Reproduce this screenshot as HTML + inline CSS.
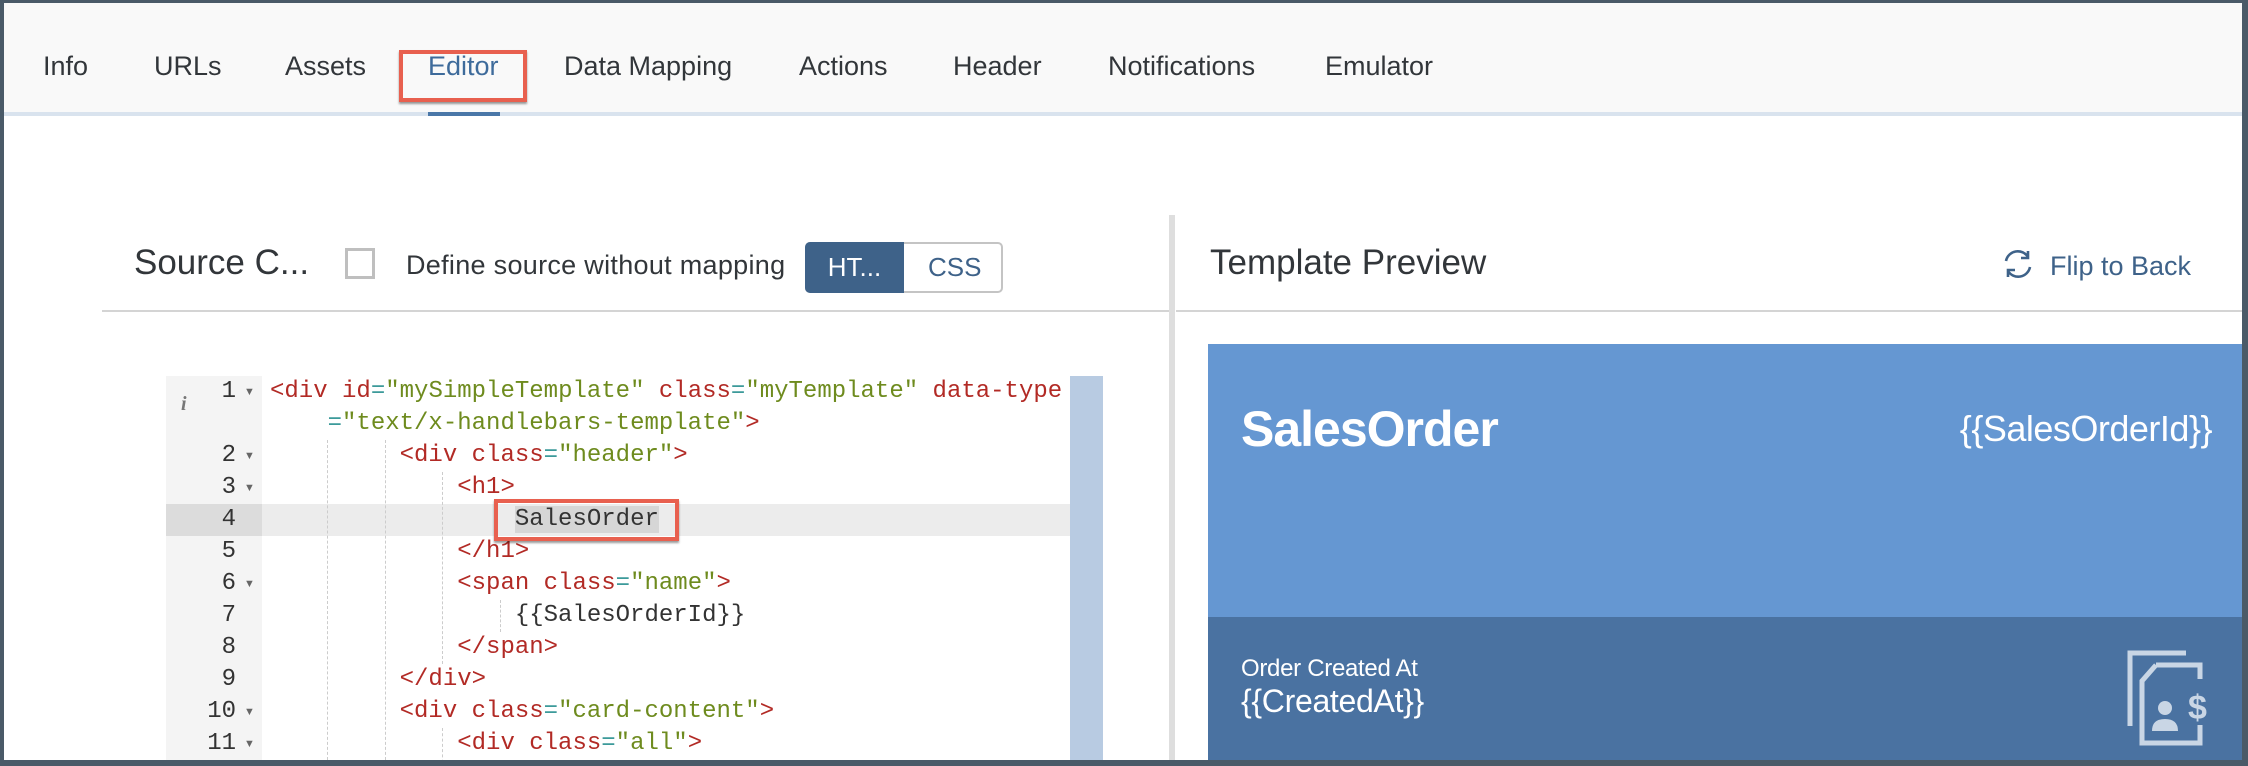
<!DOCTYPE html>
<html><head><meta charset="utf-8"><style>
*{margin:0;padding:0;box-sizing:border-box}
body{width:2248px;height:766px;overflow:hidden;background:#4a5a68;font-family:"Liberation Sans",sans-serif;position:relative}
.page{position:absolute;left:4px;top:3px;width:2238px;height:757px;background:#fff;overflow:hidden}
.a{position:absolute;white-space:nowrap}
.tabbar{position:absolute;left:0;top:0;width:2238px;height:109px;background:#f9f9f9}
.tabline{position:absolute;left:0;top:109px;width:2238px;height:4px;background:#d9e3ee}
.tab{position:absolute;top:48px;font-size:27px;color:#32363a;white-space:nowrap}
.code{font-family:"Liberation Mono",monospace;font-size:24px;color:#333}
.t{color:#b22a25}.v{color:#6e8b1e}.e{color:#3c9a9a}
.row{position:absolute;left:266px;height:32px;line-height:32px;white-space:pre}
.ln{position:absolute;width:74px;text-align:right;left:158px;height:32px;line-height:32px;font-family:"Liberation Mono",monospace;font-size:24px;color:#333}
.ar{position:absolute;left:240px;font-size:11px;color:#666;line-height:32px}
.g{position:absolute;width:0;border-left:1px dashed #ccc}
</style></head><body>
<div class="page">
<div class="tabbar"></div><div class="tabline"></div>
<div style="position:absolute;left:424px;top:109px;width:72px;height:4px;background:#4a77a8"></div>
<div class="tab" style="left:39px">Info</div>
<div class="tab" style="left:150px">URLs</div>
<div class="tab" style="left:281px">Assets</div>
<div class="tab" style="left:424px;color:#3e6b9b">Editor</div>
<div class="tab" style="left:560px">Data Mapping</div>
<div class="tab" style="left:795px">Actions</div>
<div class="tab" style="left:949px">Header</div>
<div class="tab" style="left:1104px">Notifications</div>
<div class="tab" style="left:1321px">Emulator</div>
<div style="position:absolute;left:395px;top:47px;width:128px;height:52px;border:4px solid #e8604f;box-shadow:0 2px 2px rgba(0,0,0,.4)"></div>

<!-- left header -->
<div class="a" style="left:130px;top:240px;font-size:35px;color:#32363a">Source C...</div>
<div style="position:absolute;left:341px;top:245px;width:30px;height:31px;border:3px solid #bfbfbf;background:#fff"></div>
<div class="a" style="left:402px;top:247px;font-size:27px;color:#32363a;letter-spacing:0.3px">Define source without mapping</div>
<div style="position:absolute;left:801px;top:239px;width:198px;height:51px;border:2px solid #c4c4c4;border-radius:5px;background:#fff"></div>
<div style="position:absolute;left:801px;top:239px;width:99px;height:51px;background:#3e6289;border-radius:5px 0 0 5px;color:#fff;font-size:26px;line-height:51px;text-align:center">HT...</div>
<div class="a" style="left:924px;top:239px;line-height:51px;font-size:26px;color:#3e6289">CSS</div>
<div style="position:absolute;left:98px;top:307px;width:1068px;height:2px;background:#d4d4d4"></div>

<!-- splitter -->
<div style="position:absolute;left:1165px;top:212px;width:6px;height:560px;background:#dedede"></div>

<!-- editor -->
<div style="position:absolute;left:162px;top:373px;width:96px;height:400px;background:#f4f4f4"></div>
<div style="position:absolute;left:162px;top:501px;width:96px;height:32px;background:#dcdcdc"></div>
<div style="position:absolute;left:258px;top:501px;width:808px;height:32px;background:#ececec"></div>
<div style="position:absolute;left:1066px;top:373px;width:33px;height:400px;background:#b8cbe2"></div>
<div class="a" style="left:177px;top:390px;font-family:'Liberation Serif',serif;font-style:italic;font-weight:bold;font-size:20px;color:#777">i</div>
<div class="g" style="left:323px;top:437px;height:330px"></div>
<div class="g" style="left:381px;top:437px;height:330px"></div>
<div class="g" style="left:438px;top:469px;height:192px"></div>
<div class="g" style="left:438px;top:725px;height:40px"></div>
<div class="g" style="left:496px;top:597px;height:32px"></div>

<div class="ln" style="top:373px">1</div><div class="ar" style="top:373px">▼</div>
<div class="ln" style="top:437px">2</div><div class="ar" style="top:437px">▼</div>
<div class="ln" style="top:469px">3</div><div class="ar" style="top:469px">▼</div>
<div class="ln" style="top:501px">4</div>
<div class="ln" style="top:533px">5</div>
<div class="ln" style="top:565px">6</div><div class="ar" style="top:565px">▼</div>
<div class="ln" style="top:597px">7</div>
<div class="ln" style="top:629px">8</div>
<div class="ln" style="top:661px">9</div>
<div class="ln" style="top:693px">10</div><div class="ar" style="top:693px">▼</div>
<div class="ln" style="top:725px">11</div><div class="ar" style="top:725px">▼</div>

<div class="code">
<div class="row" style="top:373px"><span class="t">&lt;div</span> <span class="t">id</span><span class="e">=</span><span class="v">"mySimpleTemplate"</span> <span class="t">class</span><span class="e">=</span><span class="v">"myTemplate"</span> <span class="t">data-type</span></div>
<div class="row" style="top:405px">    <span class="e">=</span><span class="v">"text/x-handlebars-template"</span><span class="t">&gt;</span></div>
<div class="row" style="top:437px">         <span class="t">&lt;div</span> <span class="t">class</span><span class="e">=</span><span class="v">"header"</span><span class="t">&gt;</span></div>
<div class="row" style="top:469px">             <span class="t">&lt;h1&gt;</span></div>
<div class="row" style="top:501px">                 <span style="background:#d6d6d6">SalesOrder</span></div>
<div class="row" style="top:533px">             <span class="t">&lt;/h1&gt;</span></div>
<div class="row" style="top:565px">             <span class="t">&lt;span</span> <span class="t">class</span><span class="e">=</span><span class="v">"name"</span><span class="t">&gt;</span></div>
<div class="row" style="top:597px">                 {{SalesOrderId}}</div>
<div class="row" style="top:629px">             <span class="t">&lt;/span&gt;</span></div>
<div class="row" style="top:661px">         <span class="t">&lt;/div&gt;</span></div>
<div class="row" style="top:693px">         <span class="t">&lt;div</span> <span class="t">class</span><span class="e">=</span><span class="v">"card-content"</span><span class="t">&gt;</span></div>
<div class="row" style="top:725px">             <span class="t">&lt;div</span> <span class="t">class</span><span class="e">=</span><span class="v">"all"</span><span class="t">&gt;</span></div>
</div>
<div style="position:absolute;left:490px;top:496px;width:185px;height:42px;border:4px solid #e8604f;box-shadow:0 2px 2px rgba(0,0,0,.4)"></div>

<!-- right -->
<div class="a" style="left:1206px;top:240px;font-size:35px;color:#32363a">Template Preview</div>
<svg style="position:absolute;left:1997px;top:244px" width="34" height="34" viewBox="0 0 34 34" fill="none" stroke="#3e6289" stroke-width="2.6">
<path d="M5 14 A12 12 0 0 1 27 10"/><path d="M27 4 V11 H20"/>
<path d="M29 20 A12 12 0 0 1 7 24"/><path d="M7 30 V23 H14"/></svg>
<div class="a" style="left:2046px;top:248px;font-size:27px;color:#3e6289">Flip to Back</div>
<div style="position:absolute;left:1172px;top:307px;width:1066px;height:2px;background:#d4d4d4"></div>

<div style="position:absolute;left:1204px;top:341px;width:1034px;height:273px;background:#6597d2"></div>
<div style="position:absolute;left:1204px;top:614px;width:1034px;height:150px;background:#4a72a1"></div>
<div class="a" style="left:1237px;top:397px;font-size:50px;font-weight:bold;color:#fff;letter-spacing:-1px">SalesOrder</div>
<div class="a" style="right:30px;top:405px;font-size:36px;color:#fff;letter-spacing:-0.5px">{{SalesOrderId}}</div>
<div class="a" style="left:1237px;top:652px;font-size:24px;color:#fff;letter-spacing:-0.3px">Order Created At</div>
<div class="a" style="left:1237px;top:680px;font-size:32px;color:#fff;letter-spacing:-0.3px">{{CreatedAt}}</div>
<svg style="position:absolute;left:2116px;top:642px" width="100" height="104" viewBox="2116 642 100 104" fill="none" stroke="#c9d6e5" stroke-width="5">
<path d="M2182 650 H2126 V723"/>
<path d="M2152 662 H2196 V676 M2196 722 V740 H2138 V678 L2152 662"/>
<circle cx="2161" cy="705" r="7" fill="#c9d6e5" stroke="none"/>
<path d="M2148 728 Q2148 716 2161 716 Q2174 716 2174 728 Z" fill="#c9d6e5" stroke="none"/>
<text x="2184" y="716" font-family="Liberation Sans" font-weight="bold" font-size="34" fill="#c9d6e5" stroke="none">$</text>
</svg>
</div>
</body></html>
